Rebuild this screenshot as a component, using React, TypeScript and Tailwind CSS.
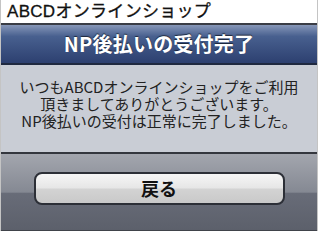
const jp = { fontFamily: '"Noto Sans CJK JP", sans-serif' };

export default function App() {
  return (
    <div className="w-[320px] h-[248px] bg-white overflow-hidden">
      <div className="w-[318px] border-x border-[#c4c4c4]">
        <header
          className="h-[23px] bg-white flex items-center pl-[6px] text-[17px] leading-none text-[#111] tracking-[0.3px] [-webkit-text-stroke:0.3px_#111]"
          style={{ fontFamily: '"Liberation Sans", "Noto Sans CJK JP", sans-serif' }}
        >
          ABCDオンラインショップ
        </header>
        <div className="h-[2px] bg-[#3a3d45]" />
        <div
          className="h-[38px] flex items-center justify-center bg-gradient-to-b from-[#8797b8] via-[#48608f] via-30% to-[#2d4070] text-white font-bold text-[20px] tracking-[0.2px] [text-shadow:0_-1px_1px_rgba(0,0,0,0.6)]"
          style={jp}
        >
          NP後払いの受付完了
        </div>
        <div className="h-[2px] bg-[#1f2940]" />
        <div
          className="h-[87px] bg-[#c9cdd5] pt-[13px] text-center text-[15px] leading-[17px] text-[#222]"
          style={jp}
        >
          <p>いつもABCDオンラインショップをご利用</p>
          <p>頂きましてありがとうございます。</p>
          <p>NP後払いの受付は正常に完了しました。</p>
        </div>
        <div className="h-[2px] bg-[#34373e]" />
        <div className="h-[76px] pt-[18px] flex justify-center bg-[linear-gradient(to_bottom,#a3a6ae_0%,#858993_50%,#686c78_52%,#5c606b_100%)]">
          <button
            className="w-[251px] h-[33px] rounded-[8px] border-2 border-[#2c2f37] bg-[linear-gradient(to_bottom,#f6f6f6_0%,#e6e6e6_48%,#d3d3d3_52%,#c9c9c9_100%)] text-[18px] font-bold text-[#111] flex items-center justify-center"
            style={jp}
          >
            戻る
          </button>
        </div>
        <div className="h-[1px] bg-[#40434a]" />
      </div>
    </div>
  );
}
